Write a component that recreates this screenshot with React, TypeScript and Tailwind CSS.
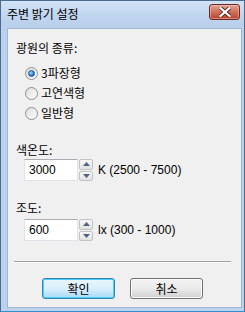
import React from "react";

const kr = { fontFamily: '"Noto Sans CJK KR", "Noto Sans", sans-serif' };
const lat = { fontFamily: '"Liberation Sans", Arial, sans-serif' };

function Radio({ checked, label }: { checked?: boolean; label: string }) {
  return (
    <div className="flex items-center h-[20px]">
      <div className="w-[13px] h-[13px] rounded-full border border-[#8f8f8f] bg-gradient-to-br from-[#dcdcdc] to-[#ffffff] flex items-center justify-center">
        {checked && (
          <div className="w-[7px] h-[7px] rounded-full bg-[radial-gradient(circle_at_35%_35%,#9fd8ff,#1f6fbf_70%,#0f4c8f)] border border-[#1a5a9a]" />
        )}
      </div>
      <span className="ml-[3px] text-[12px] text-black leading-none" style={kr}>
        {label}
      </span>
    </div>
  );
}

function Spin({ value, suffix }: { value: string; suffix: string }) {
  return (
    <div className="flex items-center ml-[8px]">
      <div
        className="w-[54px] h-[22px] border border-[#e2e3ea] border-t-[#abadb3] bg-white flex items-center pl-[4px] text-[12px] text-black"
        style={lat}
      >
        {value}
      </div>
      <div className="ml-[1px] flex flex-col w-[14px] h-[22px] gap-[1px]">
        {[0, 1].map((i) => (
          <div
            key={i}
            className="flex-1 border border-[#c3c3c3] rounded-[2px] bg-gradient-to-b from-[#f8f8f8] to-[#e2e2e2] flex items-center justify-center"
          >
            <svg width="7" height="4" viewBox="0 0 7 4">
              {i === 0 ? (
                <path d="M0 4 L3.5 0 L7 4 Z" fill="#4d6185" />
              ) : (
                <path d="M0 0 L3.5 4 L7 0 Z" fill="#4d6185" />
              )}
            </svg>
          </div>
        ))}
      </div>
      <span className="ml-[5px] text-[12px] text-black" style={lat}>
        {suffix}
      </span>
    </div>
  );
}

export default function App() {
  return (
    <div className="w-[245px] h-[312px] bg-[#bcd2ec] border border-[#4a6a8f] border-b-[#2f8fcf] flex flex-col">
      {/* title bar */}
      <div className="h-[26px] flex items-start justify-between bg-gradient-to-b from-[#d3e3f5] via-[#c2d7f0] to-[#b8cfea]">
        <span className="ml-[6px] mt-[5px] text-[12px] text-black leading-[16px]" style={kr}>
          주변 밝기 설정
        </span>
        <div className="mt-[3px] mr-[4px] w-[31px] h-[16px] rounded-[3px] border border-[#6b2a22] bg-gradient-to-b from-[#e4a595] via-[#d0705b] to-[#b8402c] flex items-center justify-center shadow-[inset_0_0_0_1px_rgba(255,200,190,0.5)]">
          <svg width="12" height="10" viewBox="0 0 12 10">
            <path d="M1.5 1 L10.5 9 M10.5 1 L1.5 9" stroke="#5a1e16" strokeWidth="4" strokeLinecap="square" />
            <path d="M1.5 1 L10.5 9 M10.5 1 L1.5 9" stroke="#ffffff" strokeWidth="2.2" strokeLinecap="square" />
          </svg>
        </div>
      </div>
      {/* client */}
      <div className="flex-1 mb-[3px] mt-[1px] ml-[6px] mr-[2px] bg-[#f0f0f0] border border-[#9fb5d0] flex flex-col pl-[8px] pt-[12px]">
        <div className="text-[12px] text-black leading-[14px]" style={kr}>
          광원의 종류:
        </div>
        <div className="ml-[9px] mt-[8px] flex flex-col">
          <Radio checked label="3파장형" />
          <Radio label="고연색형" />
          <Radio label="일반형" />
        </div>
        <div className="mt-[20px] text-[12px] text-black leading-[14px]" style={kr}>
          색온도:
        </div>
        <div className="mt-[2px]">
          <Spin value="3000" suffix="K (2500 - 7500)" />
        </div>
        <div className="mt-[20px] text-[12px] text-black leading-[14px]" style={kr}>
          조도:
        </div>
        <div className="mt-[4px]">
          <Spin value="600" suffix="lx (300 - 1000)" />
        </div>
        <div className="mt-[20px] mr-[10px] -ml-[2px] h-[2px] border-t border-[#a0a0a0] border-b border-b-white" />
        <div className="mt-[15px] flex gap-[15px] ml-[26px]">
          <button
            className="w-[73px] h-[21px] rounded-[3px] border border-[#3c7fb1] bg-gradient-to-b from-[#eaf6fd] via-[#d9f0fc] to-[#a7d9f5] text-[12px] text-black shadow-[inset_0_0_0_1px_#48d0ff]"
            style={kr}
          >
            확인
          </button>
          <button
            className="w-[73px] h-[21px] rounded-[3px] border border-[#707070] bg-gradient-to-b from-[#f2f2f2] via-[#ebebeb] to-[#cfcfcf] text-[12px] text-black shadow-[inset_0_0_0_1px_#fcfcfc]"
            style={kr}
          >
            취소
          </button>
        </div>
      </div>
    </div>
  );
}
